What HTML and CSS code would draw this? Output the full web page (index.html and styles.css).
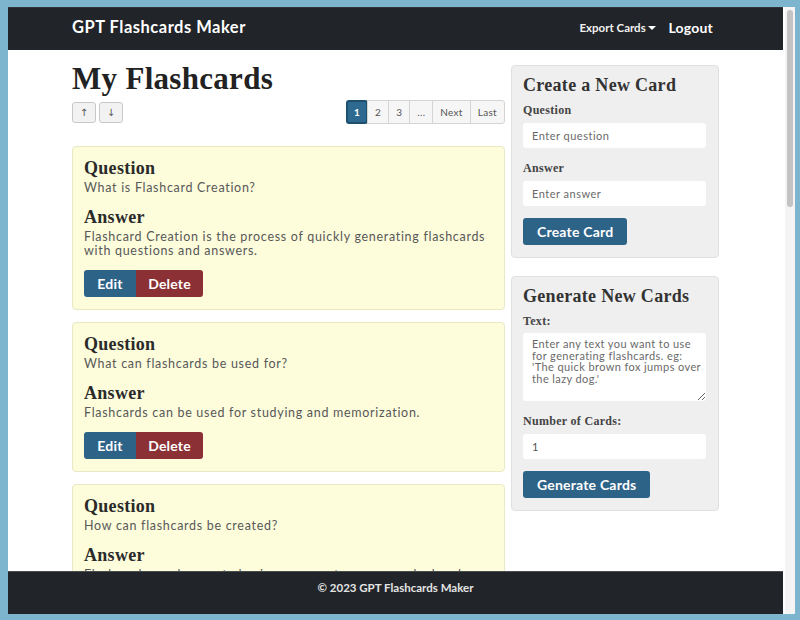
FILE: index.html
```html
<!DOCTYPE html>
<html lang="en">
<head>
<meta charset="utf-8">
<title>GPT Flashcards Maker</title>
<link rel="stylesheet" href="styles.css">
</head>
<body>
<div class="window">
  <div class="page">
    <nav class="navbar">
      <div class="nav-inner">
        <a class="brand">GPT Flashcards Maker</a>
        <div class="nav-links">
          <a class="nav-link small">Export Cards <span class="caret"></span></a>
          <a class="nav-link">Logout</a>
        </div>
      </div>
    </nav>
    <main class="main">
      <div class="container">
        <section class="left">
          <h1 class="title">My Flashcards</h1>
          <div class="toolbar">
            <div class="sort">
              <button class="sort-btn">&#8593;</button>
              <button class="sort-btn">&#8595;</button>
            </div>
            <div class="pagination">
              <span class="pg active">1</span>
              <span class="pg">2</span>
              <span class="pg">3</span>
              <span class="pg">...</span>
              <span class="pg">Next</span>
              <span class="pg">Last</span>
            </div>
          </div>
          <div class="cards">
            <article class="card">
              <h3 class="card-h">Question</h3>
              <p class="card-t">What is Flashcard Creation?</p>
              <h3 class="card-h">Answer</h3>
              <p class="card-t">Flashcard Creation is the process of quickly generating flashcards with questions and answers.</p>
              <div class="btn-group"><button class="btn edit">Edit</button><button class="btn del">Delete</button></div>
            </article>
            <article class="card">
              <h3 class="card-h">Question</h3>
              <p class="card-t">What can flashcards be used for?</p>
              <h3 class="card-h">Answer</h3>
              <p class="card-t">Flashcards can be used for studying and memorization.</p>
              <div class="btn-group"><button class="btn edit">Edit</button><button class="btn del">Delete</button></div>
            </article>
            <article class="card">
              <h3 class="card-h">Question</h3>
              <p class="card-t">How can flashcards be created?</p>
              <h3 class="card-h">Answer</h3>
              <p class="card-t">Flashcards can be created using a computer program, by hand, or through an online tool.</p>
              <div class="btn-group"><button class="btn edit">Edit</button><button class="btn del">Delete</button></div>
            </article>
          </div>
        </section>
        <aside class="right">
          <div class="panel">
            <h2 class="panel-h">Create a New Card</h2>
            <label class="lbl">Question</label>
            <input class="field" type="text" placeholder="Enter question">
            <label class="lbl">Answer</label>
            <input class="field" type="text" placeholder="Enter answer">
            <button class="btn primary">Create Card</button>
          </div>
          <div class="panel">
            <h2 class="panel-h">Generate New Cards</h2>
            <label class="lbl">Text:</label>
            <textarea class="field area" placeholder="Enter any text you want to use for generating flashcards. eg: 'The quick brown fox jumps over the lazy dog.'"></textarea>
            <label class="lbl">Number of Cards:</label>
            <input class="field" type="text" value="1">
            <button class="btn primary">Generate Cards</button>
          </div>
        </aside>
      </div>
    </main>
    <footer class="footer">&copy; 2023 GPT Flashcards Maker</footer>
  </div>
  <div class="scrollbar"><div class="thumb"></div></div>
</div>
</body>
</html>
```

FILE: styles.css
```css
* { box-sizing: border-box; }
html, body { height: 100%; }
body {
  margin: 0;
  background: #7db5cf;
  padding: 7px 5px 6px 8px;
  font-family: "Lato", "Open Sans", sans-serif;
  overflow: hidden;
}
.window {
  display: flex;
  height: 607px;
  background: #fff;
  border-radius: 2px;
}
.page {
  flex: 1;
  display: flex;
  flex-direction: column;
  min-width: 0;
}
.navbar {
  background: #212428;
  height: 43px;
  border-top: 1px solid #2f3337;
  flex: none;
  padding-bottom: 4px;
}
.nav-inner {
  width: 647px;
  margin: 0 auto;
  height: 100%;
  display: flex;
  align-items: center;
  justify-content: space-between;
}
.brand {
  color: #fff;
  font-weight: 700;
  font-size: 16.5px;
  letter-spacing: 0.5px;
}
.nav-links { display: flex; align-items: center; gap: 12px; padding-right: 6px; }
.nav-link { color: #fff; font-weight: 700; font-size: 14px; letter-spacing: 0.2px; }
.nav-link.small { font-size: 11.5px; color: #f0f0f0; letter-spacing: 0; }
.caret {
  display: inline-block;
  width: 0; height: 0;
  border-left: 4px solid transparent;
  border-right: 4px solid transparent;
  border-top: 4px solid #fff;
  vertical-align: 2px;
}
.main {
  flex: 1;
  overflow: hidden;
  min-height: 0;
}
.container {
  width: 647px;
  margin: 0 auto;
  display: flex;
  gap: 6px;
  padding-top: 14px;
}
.left { width: 433px; flex: none; }
.right { width: 208px; flex: none; display: flex; flex-direction: column; gap: 18px; padding-top: 1px; }
.title {
  margin: 0;
  font-family: "Liberation Serif", "DejaVu Serif", serif;
  font-weight: 700;
  font-size: 31px;
  line-height: 30px;
  color: #222;
  letter-spacing: 0.3px;
}
.toolbar {
  display: flex;
  justify-content: space-between;
  align-items: center;
  margin-top: 6px;
}
.sort { display: flex; gap: 3px; }
.sort-btn {
  width: 24px; height: 21px;
  border: 1px solid #c8c8c8;
  background: #f2f2f2;
  border-radius: 3px;
  font-size: 10px;
  color: #555;
  padding: 0;
  font-family: "DejaVu Sans", sans-serif;
}
.pagination { display: flex; }
.pg {
  height: 24px;
  padding: 0 7px;
  display: flex; align-items: center;
  border: 1px solid #d4d4d4;
  margin-left: -1px;
  background: #f6f6f6;
  font-size: 10px;
  letter-spacing: 0.3px;
  color: #555;
}
.pg:last-child { border-radius: 0 3px 3px 0; }
.pg.active {
  background: #2e6a8f;
  color: #fff;
  border: 2px solid #1d4f6e;
  border-radius: 3px;
  padding: 0 6px;
  font-weight: 700;
  margin-left: 0;
}
.cards { margin-top: 22px; display: flex; flex-direction: column; gap: 12px; }
.card {
  background: #fdfddc;
  border: 1px solid #e9e9c6;
  border-radius: 4px;
  padding: 10px 11px 12px;
}
.card-h {
  margin: 0;
  font-family: "Liberation Serif", "DejaVu Serif", serif;
  font-weight: 700;
  font-size: 18px;
  line-height: 22px;
  color: #2a2a2a;
  letter-spacing: 0.3px;
}
.card-t {
  margin: 2px 0 11px;
  font-size: 12.5px;
  line-height: 14px;
  letter-spacing: 0.7px;
  color: #585858;
}
.btn-group { display: flex; margin-top: 12px; }
.btn {
  border: none;
  color: #fff;
  font-family: "Lato", sans-serif;
  font-weight: 700;
  font-size: 14px;
  height: 27px;
  padding: 0 14px;
  cursor: pointer;
  letter-spacing: 0.2px;
}
.btn.edit { background: #2e6388; border-radius: 3px 0 0 3px; width: 52px; padding: 0; }
.btn.del { background: #8b3034; border-radius: 0 3px 3px 0; width: 67px; padding: 0; }
.panel {
  background: #efefef;
  border: 1px solid #e0e0e0;
  border-radius: 4px;
  padding: 9px 11px 12px;
  display: flex;
  flex-direction: column;
  align-items: flex-start;
}
.panel-h {
  margin: 0;
  font-family: "Liberation Serif", "DejaVu Serif", serif;
  font-weight: 700;
  font-size: 18px;
  line-height: 20px;
  color: #333;
  letter-spacing: 0.3px;
}
.lbl {
  margin-top: 8px;
  font-family: "Liberation Serif", "DejaVu Serif", serif;
  font-weight: 700;
  font-size: 12px;
  color: #444;
  line-height: 14px;
  letter-spacing: 0.3px;
}
.field {
  margin-top: 6px;
  width: 183px;
  height: 25px;
  border: none;
  border-radius: 3px;
  background: #fff;
  padding: 0 9px;
  font-family: "Lato", sans-serif;
  font-size: 11px;
  letter-spacing: 0.5px;
  color: #555;
  margin-bottom: 5px;
}
.field::placeholder { color: #6a6a6a; }
.area {
  height: 68px;
  padding: 5px 4px 5px 9px;
  resize: vertical;
  line-height: 11.5px;
  margin-top: 5px;
  letter-spacing: 0.4px;
}
.btn.primary {
  background: #2e6388;
  border-radius: 3px;
  margin-top: 7px;
  padding: 0 14px;
}
.footer {
  flex: none;
  background: #212428;
  height: 43px;
  color: #e4e4e4;
  font-weight: 700;
  font-size: 11.5px;
  text-align: center;
  padding-top: 9px;
  border-top: 1px solid #4a4d50;
}
.scrollbar {
  width: 12px;
  flex: none;
  background: #f4f4f4;
  border-left: 2px solid #fff;
  padding: 3px 2px;
}
.thumb {
  height: 197px;
  background: #c3c3c3;
  border-radius: 4px;
}
```
